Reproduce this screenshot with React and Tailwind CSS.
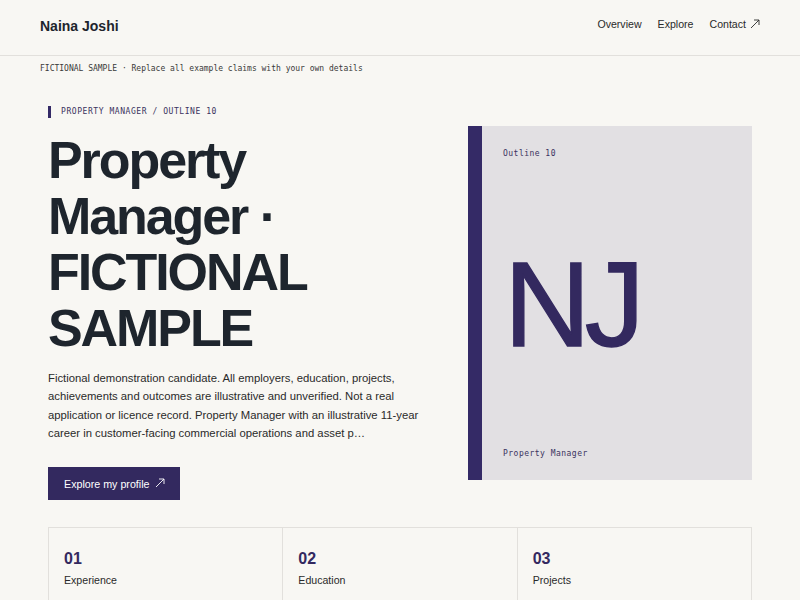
const sections = [
  { n: '01', label: 'Experience' },
  { n: '02', label: 'Education' },
  { n: '03', label: 'Projects' },
];

function Arrow({ className }) {
  return (
    <svg viewBox="0 0 10 10" className={className} fill="none" stroke="currentColor" strokeWidth="0.9">
      <path d="M1 9 L9 1" />
      <path d="M4 1 H9 V6" />
    </svg>
  );
}

export default function App() {
  return (
    <div
      className="min-h-[600px] w-full overflow-hidden bg-[#f8f7f3] text-[#2a2a2a] [font-family:'Liberation_Sans',Arial,sans-serif]"
    >
      {/* Header */}
      <header className="h-[56px] px-10 flex items-center justify-between border-b border-[#e2e0dc]">
        <div className="text-[14px] font-bold text-[#1e252d] -mt-[2px]">Naina Joshi</div>
        <nav className="flex items-center gap-4 text-[10.6px] text-[#2a2a2a] -mt-[5px]">
          <a>Overview</a>
          <a>Explore</a>
          <a className="flex items-center gap-[4px]">
            Contact <Arrow className="w-[10px] h-[10px] -mt-[2px]" />
          </a>
        </nav>
      </header>

      {/* Notice */}
      <div className="px-10 pt-[7px] text-[8px] leading-[12px] text-[#3a3a3a] [font-family:'DejaVu_Sans_Mono',monospace]">
        FICTIONAL SAMPLE · Replace all example claims with your own details
      </div>

      {/* Hero */}
      <main className="px-12">
        <section className="flex items-center gap-10 pt-[30px]">
          <div className="w-[380px] shrink-0">
            <div className="border-l-[3px] border-[#342a66] pl-[10px] mt-[1px] text-[8px] leading-[12px] tracking-[0.07em] text-[#3a3360] [font-family:'DejaVu_Sans_Mono',monospace]">
              PROPERTY MANAGER / OUTLINE 10
            </div>
            <h1 className="mt-[14px] text-[52px] leading-[56px] font-bold tracking-[-0.04em] text-[#1e252d]">
              Property Manager · FICTIONAL SAMPLE
            </h1>
            <p className="mt-[13px] text-[11.3px] leading-[18.3px] text-[#2a2a2a]">
              Fictional demonstration candidate. All employers, education, projects, achievements and outcomes are illustrative and unverified. Not a real application or licence record. Property Manager with an illustrative 11-year career in customer-facing commercial operations and asset p…
            </p>
            <button className="mt-[25px] h-[33px] pl-4 pr-[15px] bg-[#33295f] text-white text-[10.7px] flex items-center gap-[5px]">
              Explore my profile <Arrow className="w-[10px] h-[10px] -mt-[1px]" />
            </button>
          </div>

          <div className="w-[284px] h-[354px] shrink-0 bg-[#e2e0e3] border-l-[14px] border-[#342a66] flex flex-col justify-between pl-[21px] pt-[22px] pb-[20px]">
            <div className="text-[8px] leading-[12px] tracking-[0.06em] text-[#3a3360] [font-family:'DejaVu_Sans_Mono',monospace]">
              Outline 10
            </div>
            <div className="text-[120px] leading-none tracking-[-0.05em] text-[#33295f] [-webkit-text-stroke:1.4px_#33295f] ml-[1px]">
              NJ
            </div>
            <div className="text-[8px] leading-[12px] tracking-[0.06em] text-[#3a3360] [font-family:'DejaVu_Sans_Mono',monospace]">
              Property Manager
            </div>
          </div>
        </section>

        {/* Sections */}
        <section className="mt-[27px] grid grid-cols-3 border-t border-l border-[#e2e0dc]">
          {sections.map((s) => (
            <div key={s.n} className="border-r border-[#e2e0dc] pt-[21px] pl-[15px] pr-4 h-[90px]">
              <div className="text-[16px] leading-[19px] font-bold text-[#33295f]">{s.n}</div>
              <div className="mt-[5px] text-[10.6px] text-[#2a2a2a]">{s.label}</div>
            </div>
          ))}
        </section>
      </main>
    </div>
  );
}
